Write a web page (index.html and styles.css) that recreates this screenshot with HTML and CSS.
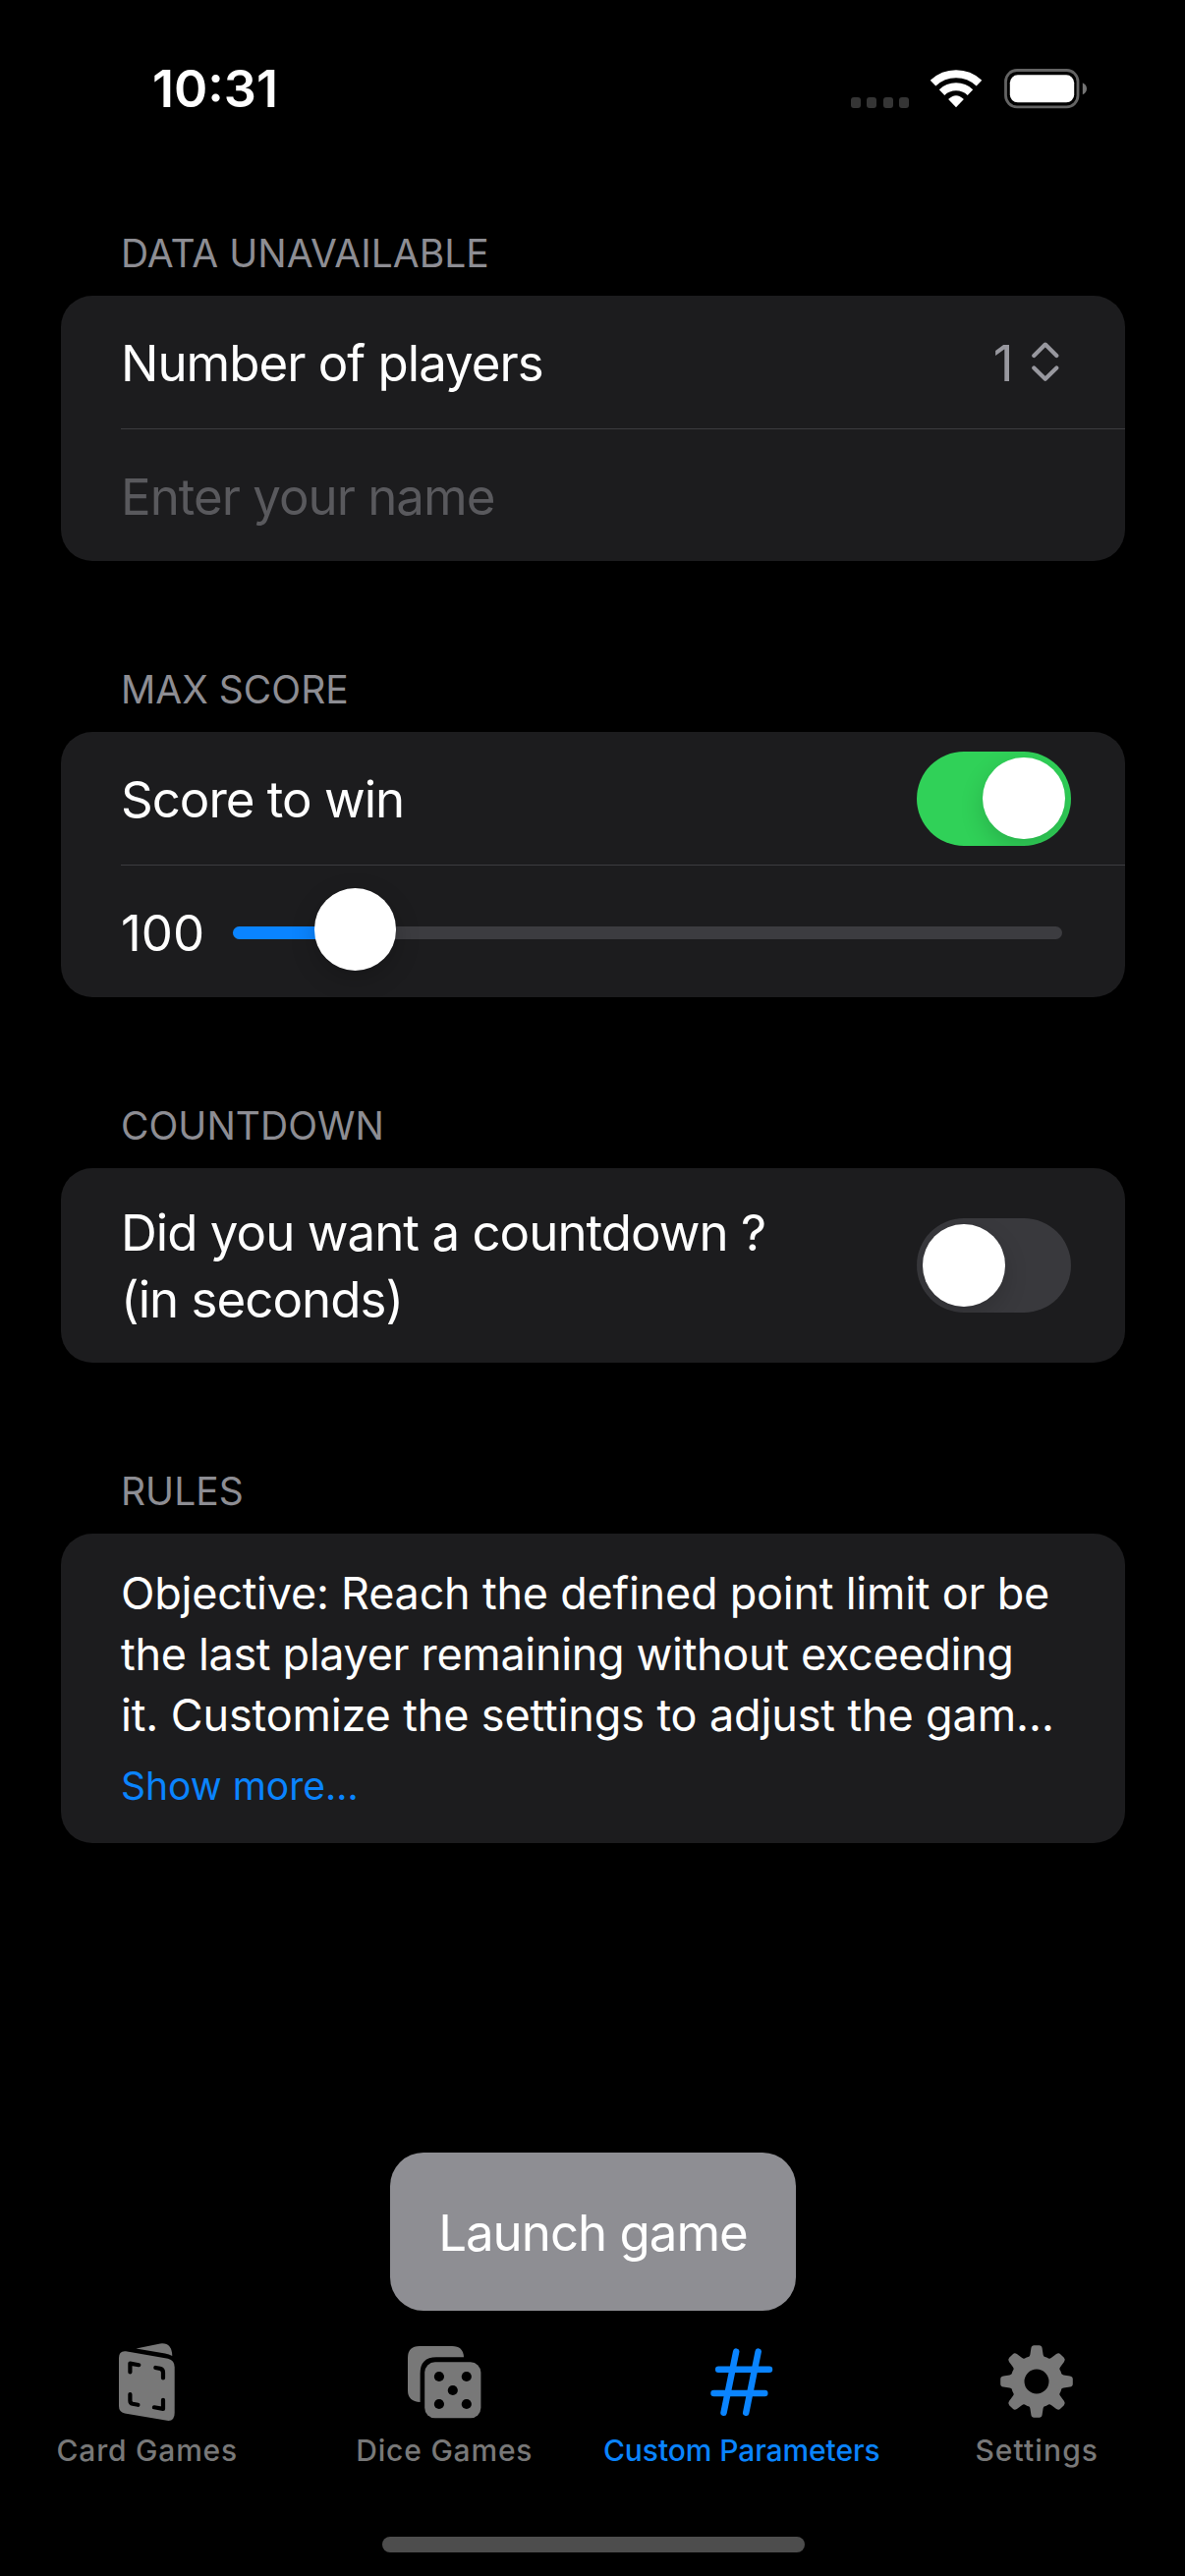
FILE: index.html
```html
<!DOCTYPE html>
<html lang="en">
<head>
<meta charset="utf-8">
<title>Custom Parameters</title>
<link rel="stylesheet" href="styles.css">
</head>
<body>
<header class="status">
  <div class="clock">10:31</div>
  <div class="indicators">
    <div class="dots"><i></i><i></i><i></i><i></i></div>
    <svg class="wifi" width="52" height="40" viewBox="0 0 52 40" fill="none" stroke="#fff" stroke-width="8">
      <path d="M2.6 14.65A34 34 0 0 1 49.4 14.65"/>
      <path d="M11.55 24.1A21 21 0 0 1 40.45 24.1"/>
      <path d="M26 39.3L18.1 31.1Q26 23.4 33.9 31.1Z" fill="#fff" stroke="none"/>
    </svg>
    <svg class="battery" width="84" height="41" viewBox="0 0 84 41">
      <rect x="1.5" y="1.5" width="73.5" height="37.3" rx="11.5" fill="none" stroke="#636363" stroke-width="2.8"/>
      <rect x="5.8" y="6.3" width="65.4" height="28" rx="8" fill="#fff"/>
      <path d="M79.8 14.2Q84 16.2 84 20.2T79.8 26.2Z" fill="#757575"/>
    </svg>
  </div>
</header>

<main class="form">
  <section class="group">
    <h2 class="heading">DATA UNAVAILABLE</h2>
    <div class="card">
      <div class="row">
        <span class="label">Number of players</span>
        <span class="picker">
          <span class="label">1</span>
          <svg width="28" height="42" viewBox="0 0 28 42" fill="none" stroke="#98989f" stroke-width="4.2" stroke-linecap="round" stroke-linejoin="round">
            <path d="M2.3 15L13.8 3.6L25.3 15M2.3 27.5L13.8 38.7L25.3 27.5"/>
          </svg>
        </span>
      </div>
      <div class="row"><span class="label placeholder">Enter your name</span></div>
    </div>
  </section>

  <section class="group">
    <h2 class="heading">MAX SCORE</h2>
    <div class="card">
      <div class="row">
        <span class="label">Score to win</span>
        <span class="toggle on"><i class="knob"></i></span>
      </div>
      <div class="row slider-row">
        <span class="label value">100</span>
        <div class="slider"><div class="fill"></div><i class="knob"></i></div>
      </div>
    </div>
  </section>

  <section class="group">
    <h2 class="heading">COUNTDOWN</h2>
    <div class="card">
      <div class="row tall">
        <span class="label double">Did you want a countdown ?<br>(in seconds)</span>
        <span class="toggle"><i class="knob"></i></span>
      </div>
    </div>
  </section>

  <section class="group">
    <h2 class="heading">RULES</h2>
    <div class="card rules">
      <p class="text">
        <span class="line">Objective: Reach the defined point limit or be</span>
        <span class="line snug">the last player remaining without exceeding</span>
        <span class="line loose">it. Customize the settings to adjust the gam…</span>
      </p>
      <a class="more">Show more…</a>
    </div>
  </section>
</main>

<button class="launch">Launch game</button>

<nav class="tabs">
  <a class="tab wide">
    <svg width="90" height="90" viewBox="0 0 90 90" fill="#787878">
      <path d="M32.5 10.6L57 5.4Q69 4 69.3 18Q66 16.2 62 15.5Z"/>
      <path d="M22 13.2L65 20.7Q71.7 22.3 71.7 29.5V76Q71.7 84.8 64 83.8L21 76.5Q15 75.3 15 69V20Q15 12.5 22 13.2Z"/>
      <g fill="none" stroke="#000" stroke-width="4.2" stroke-linecap="round" stroke-linejoin="round">
        <path d="M26.4 34.5V25.6L35.3 27.2"/>
        <path d="M52.3 30L57 30.9Q60 31.5 60 35V40.5"/>
        <path d="M26.4 57V63.5Q26.4 66.2 29 66.8L34.4 67.8"/>
        <path d="M60 62.8V71.9L50.9 70.3"/>
      </g>
    </svg>
    <span class="first">Card Games</span>
  </a>
  <a class="tab wide">
    <svg width="90" height="90" viewBox="0 0 90 90" fill="#787878">
      <path d="M20.6 65Q8 64.5 8 53V20Q8 8 20 8H53Q64.5 8 65 19.3H37Q20.6 19.3 20.6 36Z"/>
      <rect x="25.2" y="24.3" width="57.2" height="57" rx="10.5"/>
      <g fill="#000">
        <circle cx="39.9" cy="39" r="5.1"/><circle cx="67.8" cy="39" r="5.1"/>
        <circle cx="53.8" cy="53" r="5.1"/>
        <circle cx="39.9" cy="67" r="5.1"/><circle cx="67.8" cy="67" r="5.1"/>
      </g>
    </svg>
    <span>Dice Games</span>
  </a>
  <a class="tab active">
    <svg width="90" height="90" viewBox="0 0 90 90" fill="none" stroke="#0a84ff" stroke-width="6.5" stroke-linecap="round">
      <path d="M22.2 31.8H74M17.5 56H69.3M40.2 13.6L27.5 75.8M62.7 13.6L50.2 75.8"/>
    </svg>
    <span>Custom Parameters</span>
  </a>
  <a class="tab wider">
    <svg width="90" height="90" viewBox="0 0 90 90" fill="#787878">
      <defs><path id="tooth" d="M34.3 21Q37.8 19.8 38.4 16.5L39.4 10Q39.9 7.2 42.4 7.2H47.6Q50.1 7.2 50.6 10L51.6 16.5Q52.2 19.8 55.7 21Z"/></defs>
      <circle cx="45" cy="44" r="19.5" fill="none" stroke="#787878" stroke-width="14"/>
      <use href="#tooth"/>
      <use href="#tooth" transform="rotate(45 45 44)"/>
      <use href="#tooth" transform="rotate(90 45 44)"/>
      <use href="#tooth" transform="rotate(135 45 44)"/>
      <use href="#tooth" transform="rotate(180 45 44)"/>
      <use href="#tooth" transform="rotate(225 45 44)"/>
      <use href="#tooth" transform="rotate(270 45 44)"/>
      <use href="#tooth" transform="rotate(315 45 44)"/>
    </svg>
    <span>Settings</span>
  </a>
</nav>
<div class="home-bar"></div>
</body>
</html>
```
FILE: styles.css
```css
* { box-sizing: border-box; margin: 0; padding: 0; }

body {
  width: 1206px;
  height: 2622px;
  display: flex;
  flex-direction: column;
  background: #000;
  color: #fff;
  font-family: Inter, "Liberation Sans", sans-serif;
  overflow: hidden;
}

svg { display: block; flex: none; }

/* Status bar */
.status {
  height: 127.2px;
  flex: none;
  display: flex;
  justify-content: space-between;
  align-items: flex-start;
  padding: 60.5px 100px 0 155px;
}
.clock { font-size: 52px; font-weight: 600; line-height: 60px; }
.indicators { display: flex; align-items: flex-end; margin-top: 9px; height: 40px; }
.dots { display: flex; gap: 6.3px; margin-right: 22px; }
.dots i { width: 10.2px; height: 10.2px; border-radius: 3px; background: #353535; }
.wifi { margin-right: 22.7px; }
.battery { align-self: flex-start; }

/* Form */
.form { flex: 1; padding: 0 61.5px; }
.group { padding-top: 106.8px; }
.heading {
  padding-left: 61.5px;
  font-size: 39px;
  font-weight: 400;
  line-height: 48px;
  letter-spacing: 0.02px;
  color: #8d8d93;
}
.card {
  margin-top: 19px;
  border-radius: 32px;
  background: #1c1c1e;
}
.row {
  height: 135px;
  margin-left: 61.5px;
  padding-right: 55px;
  display: flex;
  align-items: center;
  justify-content: space-between;
}
.row + .row { height: 135.3px; border-top: 1px solid #3c3c3f; }
.row.tall { height: 198px; }
.label {
  margin-top: 3px;
  font-size: 51px;
  line-height: 60px;
  letter-spacing: -1px;
}
.label.double { margin-top: 1px; line-height: 68px; letter-spacing: -0.97px; }
.label.value { letter-spacing: 0; }
.placeholder { color: #59595d; }
.picker {
  display: flex;
  align-items: center;
  gap: 19px;
  margin-right: 12px;
  color: #98989f;
}

/* Toggle and slider */
.knob { display: block; width: 83.5px; height: 83.5px; border-radius: 50%; background: #fff; }
.toggle {
  width: 156.5px;
  height: 96px;
  padding: 6px;
  display: flex;
  flex: none;
  border-radius: 48px;
  background: #39393d;
  overflow: hidden;
}
.toggle.on { justify-content: flex-end; background: #30d158; }
.toggle .knob { box-shadow: 0 9px 24px rgba(0, 0, 0, 0.16); }
.slider-row { gap: 28.5px; padding-right: 64px; }
.slider {
  position: relative;
  flex: 1;
  height: 12.5px;
  margin-top: 3px;
  border-radius: 7px;
  background: #3c3c40;
}
.slider .fill { width: 125px; height: 100%; border-radius: 7px; background: #0a84ff; }
.slider .knob {
  position: absolute;
  left: 83px;
  top: -39px;
  box-shadow: 0 8px 26px rgba(0, 0, 0, 0.2);
}

/* Rules */
.rules { height: 315.5px; padding: 30px 61.5px 0; }
.line {
  display: block;
  font-size: 45px;
  line-height: 62px;
  letter-spacing: -0.235px;
  white-space: nowrap;
}
.line.snug { letter-spacing: -0.33px; }
.line.loose { letter-spacing: -0.14px; }
.more {
  display: block;
  margin-top: 17.5px;
  font-size: 39px;
  line-height: 48px;
  color: #0a84ff;
}

.launch {
  width: 413px;
  height: 161px;
  flex: none;
  align-self: center;
  margin-left: 1px;
  padding-top: 2px;
  border: 0;
  border-radius: 34px;
  background: #8e8e93;
  color: #fff;
  font: 400 51px/60px Inter, "Liberation Sans", sans-serif;
  letter-spacing: -1px;
}

/* Tab bar */
.tabs { display: grid; grid-template-columns: repeat(4, 1fr); margin-top: 28px; flex: none; }
.tab {
  display: flex;
  flex-direction: column;
  align-items: center;
  gap: 6px;
  font-size: 30px;
  font-weight: 500;
  line-height: 36px;
  letter-spacing: -0.09px;
  white-space: nowrap;
  color: #787878;
}
.tab.active { color: #0a84ff; }
.tab.active span { margin-left: 2px; }
.tab.wide { letter-spacing: 0.8px; }
.tab.wider { letter-spacing: 1.1px; }
.tab .first { margin-right: 2px; }

.home-bar {
  flex: none;
  align-self: center;
  width: 430px;
  height: 15.5px;
  margin: 70px 0 24.5px 1px;
  border-radius: 8px;
  background: #4d4d4d;
}
```
